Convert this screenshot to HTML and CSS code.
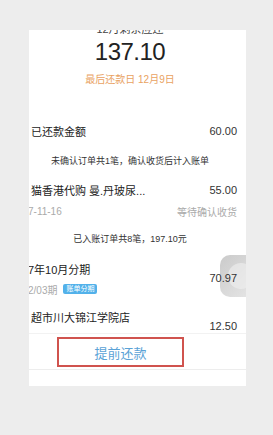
FILE: index.html
```html
<!DOCTYPE html>
<html lang="zh-CN">
<head>
    <meta charset="UTF-8">
    <meta name="viewport" content="width=device-width, initial-scale=1.0">
    <title>账单</title>
    <link rel="stylesheet" href="styles.css">
</head>
<body>
    <div class="panel">
        <div class="scroll">
            <div class="content">
                <div class="head">
                    <div class="head-label">12月剩余应还</div>
                    <div class="head-amount">137.10</div>
                    <div class="head-date">最后还款日 12月9日</div>
                </div>

                <div class="row">
                    <span>已还款金额</span>
                    <span class="num">60.00</span>
                </div>

                <div class="note">未确认订单共1笔，确认收货后计入账单</div>

                <div class="item item-top">
                    <div class="item-title">猫香港代购 曼.丹玻尿...</div>
                    <div class="item-num num">55.00</div>
                    <div class="item-sub cut">7-11-16</div>
                    <div class="item-state">等待确认收货</div>
                </div>

                <div class="note">已入账订单共8笔，197.10元</div>

                <div class="item">
                    <div class="item-title cut">7年10月分期</div>
                    <div class="item-num num">70.97</div>
                    <div class="item-sub cut">2/03期 <span class="tag">账单分期</span></div>
                </div>

                <div class="item">
                    <div class="item-title">超市川大锦江学院店</div>
                    <div class="item-num num">12.50</div>
                </div>
            </div>
        </div>

        <div class="footer">
            <button class="pay-btn">提前还款</button>
        </div>

        <div class="float-btn"><span></span></div>
    </div>
</body>
</html>
```

FILE: styles.css
```css
body {
    margin: 0;
    padding: 30px 0 0 29px;
    background-color: #ededed;
    font-family: "Liberation Sans", "Noto Sans CJK SC", sans-serif;
    color: #222222;
}
.panel {
    position: relative;
    width: 217px;
    height: 356px;
    background-color: #ffffff;
    overflow: hidden;
    display: flex;
    flex-direction: column;
}
.scroll {
    flex: 1;
    overflow: hidden;
}
.content {
    position: relative;
    z-index: 1;
    margin-left: -14px;
    width: 230px;
}
.head {
    text-align: center;
    margin-top: -8px;
}
.head-label {
    font-size: 11px;
    line-height: 14px;
    color: #444444;
}
.head-amount {
    margin-top: 2px;
    font-size: 24px;
    line-height: 28px;
    letter-spacing: -0.5px;
    color: #222222;
}
.head-date {
    margin-top: 7px;
    font-size: 10px;
    line-height: 14px;
    color: #e9a262;
}
.row {
    margin-top: 26px;
    height: 36px;
    padding: 0 8px 0 16px;
    display: flex;
    align-items: center;
    justify-content: space-between;
    font-size: 11px;
}
.num {
    font-size: 11px;
    color: #333333;
}
.note {
    height: 30px;
    line-height: 30px;
    text-align: center;
    font-size: 9px;
    color: #333333;
}
.row + .note {
    height: 24px;
    line-height: 24px;
}
.item {
    display: grid;
    grid-template-columns: 1fr auto;
    grid-template-rows: 20px 16px;
    row-gap: 2px;
    align-items: center;
    padding: 5px 8px 5px 16px;
}
.item-top {
    padding-top: 7px;
    row-gap: 3px;
}
.item-title {
    font-size: 11px;
}
.item-num {
    grid-row: 1 / 3;
    grid-column: 2;
    justify-self: end;
}
.item-top .item-num {
    grid-row: 1;
}
.item-sub {
    grid-column: 1;
    font-size: 10px;
    color: #aaaaaa;
    display: flex;
    align-items: center;
    gap: 6px;
}
.item-state {
    grid-column: 2;
    justify-self: end;
    font-size: 10px;
    color: #aaaaaa;
}
.cut {
    margin-left: -3px;
}
.tag {
    display: inline-block;
    height: 10px;
    line-height: 10px;
    padding: 0 3px;
    border-radius: 2px;
    background-color: #52b1ea;
    color: #ffffff;
    font-size: 7px;
}
.footer {
    height: 37px;
    padding: 3px 0 0 28px;
    border-top: 1px solid #f2f2f2;
    border-bottom: 1px solid #ededed;
    margin-bottom: 16px;
    box-sizing: border-box;
    background-color: #ffffff;
}
.pay-btn {
    width: 127px;
    height: 30px;
    border: 2px solid #d0534e;
    background-color: #ffffff;
    color: #5aa2d6;
    font-family: "Noto Sans CJK SC", sans-serif;
    font-size: 13px;
    padding: 0;
}
.float-btn {
    position: absolute;
    left: 191px;
    top: 225px;
    width: 42px;
    height: 42px;
    border-radius: 10px;
    background: linear-gradient(135deg, rgba(150, 150, 150, 0.5), rgba(200, 200, 200, 0.4));
    display: flex;
    align-items: center;
    justify-content: center;
}
.float-btn span {
    width: 26px;
    height: 26px;
    border-radius: 50%;
    background-color: rgba(240, 240, 240, 0.6);
}
```
